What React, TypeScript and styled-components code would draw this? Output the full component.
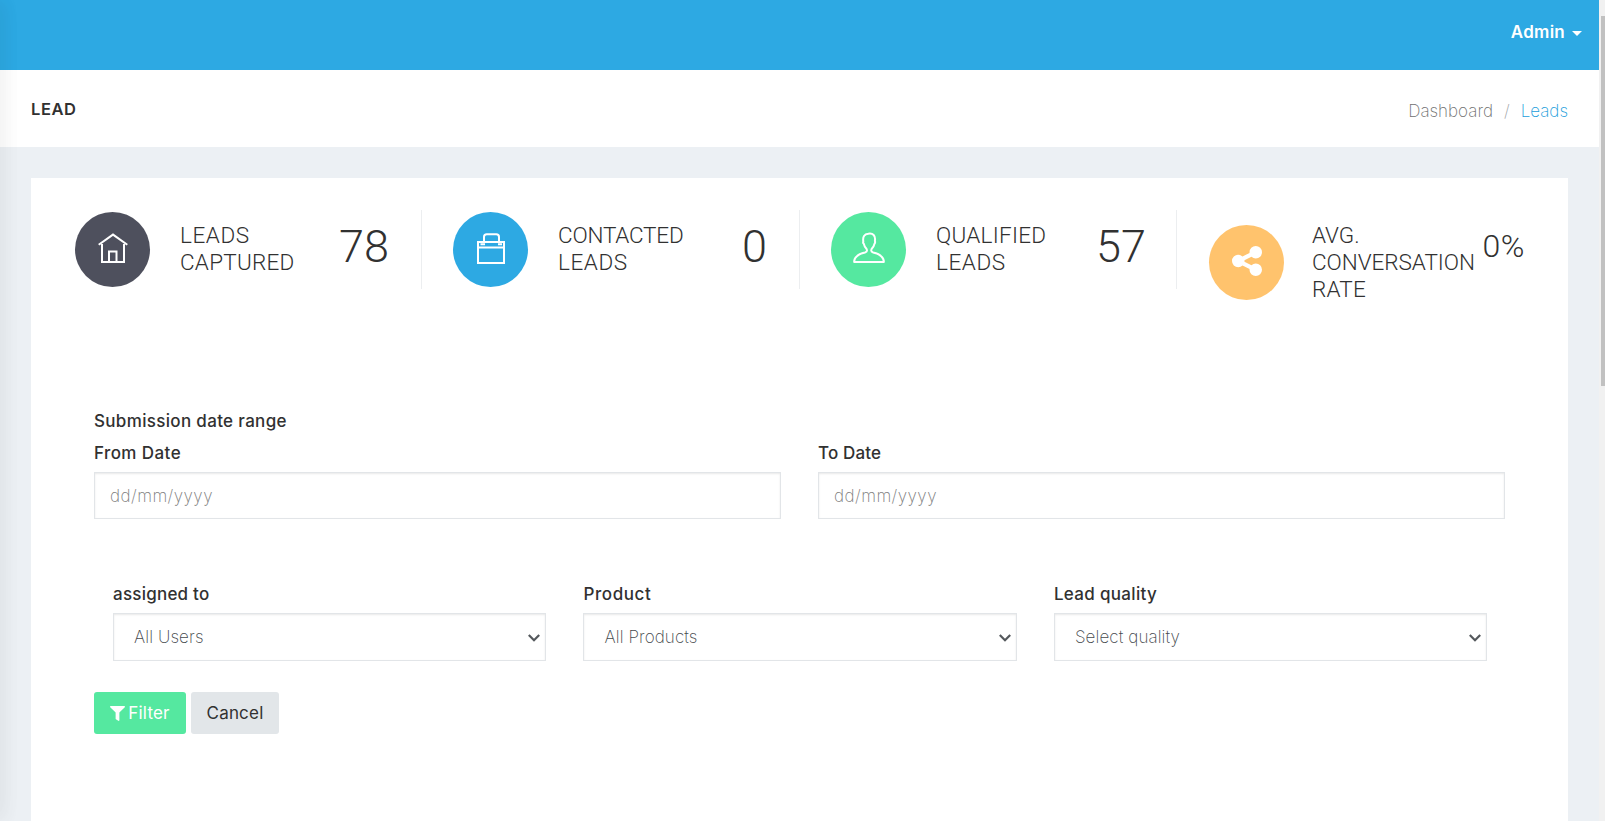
import React from "react";
import styled, { createGlobalStyle } from "styled-components";
import { FaFilter } from "react-icons/fa";

const GlobalStyle = createGlobalStyle`
  * { box-sizing: border-box; }
  html, body { margin: 0; height: 100%; overflow: hidden; background: #ecf0f4; }
  body { font-family: Inter, Roboto, sans-serif; font-size: 17px; font-weight: 200; color: #313131; }
`;

const Screen = styled.div`
  position: relative;
  display: flex;
  height: 821px;
  overflow: hidden;
`;

const SidebarShadow = styled.div`
  position: absolute;
  left: -10px;
  top: 0;
  width: 10px;
  height: 100%;
  box-shadow: 1px 0 20px rgba(0, 0, 0, 0.08), 0 0 24px rgba(0, 0, 0, 0.05);
`;

const Page = styled.div`
  flex: 1;
  min-width: 0;
`;

const TopBar = styled.header`
  display: flex;
  justify-content: flex-end;
  height: 70px;
  padding: 21px 17px 0 0;
  background: #2da9e3;
`;

const UserMenu = styled.div`
  display: flex;
  align-items: center;
  height: 22px;
  gap: 7px;
  color: #fff;
  font-size: 17px;
  font-weight: 600;
  letter-spacing: 0.25px;
`;

const Caret = styled.span`
  margin-top: 2px;
  border: 5px solid transparent;
  border-top-color: #fff;
  border-bottom: 0;
`;

const TitleBar = styled.div`
  display: flex;
  justify-content: space-between;
  height: 77px;
  padding: 0 31px 0 31px;
  background: #fff;
`;

const PageTitle = styled.h4`
  margin: 28px 0 0;
  font-size: 16.5px;
  font-weight: 600;
  line-height: 22px;
  letter-spacing: 0.6px;
`;

const Breadcrumb = styled.nav`
  display: flex;
  gap: 11px;
  margin-top: 30px;
  line-height: 22px;
  color: #6f6f6f;
`;

const Separator = styled.span`
  color: #a0a4a8;
`;

const Current = styled.span`
  color: #1a9ddb;
`;

const Card = styled.main`
  height: 700px;
  margin: 31px 31px 0;
  padding: 32px 13px 0 12px;
  background: #fff;
`;

const Stats = styled.section`
  display: grid;
  grid-template-columns: 379px 378px 377px 378px;
  height: 195px;
  align-items: start;
`;

const Stat = styled.div`
  display: flex;
  align-items: flex-start;
  min-height: 79px;
  padding: 0 32px;
  border-right: 1px solid #eceef0;
  & + & { padding-left: 31px; }
  &:nth-child(3) { padding-right: 30px; }
  &:last-child { border-right: 0; padding-left: 32px; padding-right: 30px; }
`;

const StatBody = styled.div<{ $tall: boolean }>`
  display: flex;
  align-items: center;
  margin-top: 12px;
  --icon-shift: ${(p) => (p.$tall ? "-11px 28px -10px 0" : "-10px 30px -11px 0")};
`;

const StatIcon = styled.div<{ $color: string }>`
  display: flex;
  align-items: center;
  justify-content: center;
  flex: none;
  width: 75px;
  height: 75px;
  margin: var(--icon-shift);
  padding-bottom: 3px;
  border-radius: 50%;
  background: ${(p) => p.$color};
  color: #fff;
`;

const StatLabel = styled.div`
  width: 150px;
  font: 300 22.5px/27px Roboto, sans-serif;
`;

const LabelLine = styled.span<{ $spacing: number }>`
  display: block;
  white-space: nowrap;
  letter-spacing: ${(p) => p.$spacing}px;
`;

const StatValue = styled.div<{ $small?: boolean }>`
  margin: ${(p) => (p.$small ? "17px" : "10px")} 0 0 auto;
  font: 300 ${(p) => (p.$small ? "32px/38px" : "45px/54px")} Roboto, sans-serif;
  letter-spacing: ${(p) => (p.$small ? "0.6px" : "0")};
`;

const Form = styled.form`
  padding: 0 50px 0 51px;
`;

const RangeTitle = styled.div`
  font-weight: 500;
  line-height: 32px;
  letter-spacing: 0.33px;
`;

const DateRow = styled.div`
  display: grid;
  grid-template-columns: 1fr 1fr;
  gap: 37px;
`;

const SelectRow = styled.div`
  display: grid;
  grid-template-columns: repeat(3, 1fr);
  gap: 37.4px;
  margin: 59px 18px 31px 19px;
`;

const Field = styled.label`
  display: flex;
  flex-direction: column;
`;

const FieldLabel = styled.span<{ $spacing: number }>`
  height: 35px;
  font-weight: 500;
  line-height: 32px;
  letter-spacing: ${(p) => p.$spacing}px;
`;

const DateInput = styled.input`
  width: 100%;
  height: 47px;
  padding: 0 15px;
  border: 1px solid #e2e5e8;
  border-radius: 0;
  outline: 0;
  background: #fff;
  box-shadow: inset 0 1px 2px rgba(0, 0, 0, 0.09);
  font: 200 17px Inter, sans-serif;
  letter-spacing: 0.45px;
  &::placeholder { color: #7c7c7c; opacity: 1; }
`;

const SelectBox = styled.span`
  display: grid;
  align-items: center;
  & > * { grid-area: 1 / 1; }
  & > svg { justify-self: end; margin: 1px 5px 0 0; color: #54585c; pointer-events: none; }
`;

const Select = styled.select`
  appearance: none;
  width: 100%;
  height: 48px;
  padding: 0 20px 1px;
  border: 1px solid #e2e5e8;
  border-radius: 0;
  background-color: #fff;
  box-shadow: inset 0 1px 2px rgba(0, 0, 0, 0.09);
  color: #45494d;
  font: 200 17px Inter, sans-serif;
  letter-spacing: 0.1px;
`;

const Actions = styled.div`
  display: flex;
  gap: 5px;
`;

const Button = styled.button<{ $primary?: boolean }>`
  display: flex;
  align-items: center;
  justify-content: center;
  gap: 3px;
  width: ${(p) => (p.$primary ? 92 : 88)}px;
  height: 42px;
  padding: 0;
  border: 0;
  border-radius: 3px;
  background: ${(p) => (p.$primary ? "#55e8a0" : "#e2e6e9")};
  color: ${(p) => (p.$primary ? "#fff" : "#313131")};
  font: 400 17px Inter, sans-serif;
  letter-spacing: 0.2px;
`;

const ScrollTrack = styled.div`
  width: 6px;
  padding: 16px 0 0 2px;
  background: #f1f1f1;
`;

const ScrollThumb = styled.div`
  height: 370px;
  background: #c1c1c1;
`;

const HomeIcon = () => (
  <svg width="30" height="30" viewBox="0 0 30 30" fill="none" stroke="currentColor" strokeWidth="2">
    <path d="M.7 11.8 15 1.6l14.300 10.200M4 11V29h22V11M11 29V18.500h7.500v10.500" />
  </svg>
);

const BagIcon = () => (
  <svg width="28" height="31" viewBox="0 0 28 31" fill="none" stroke="currentColor" strokeWidth="2">
    <path d="M1 9h26v21H1ZM1 14.500h26M7 10V4q0-2.700 2.700-2.700h9.600Q22 1.300 22 4v6" />
    <path d="M3.500 11.200H8M21 11.200h4" />
  </svg>
);

const UserIcon = () => (
  <svg width="32" height="32" viewBox="0 0 32 32" fill="none" stroke="currentColor" strokeWidth="2" strokeLinejoin="round">
    <path d="M14 18.500c0-1.200-.4-1.900-1.300-2.800-1.100-1.100-1.500-2.500-1.900-4-.8-.6-.8-1.500-.5-2.300-.7-4.400 1-7.400 5-7.700 4.600-.9 7.500 2 6.600 7.200.4 1.200.3 2.200-.5 3-.4 1.500-.9 2.800-1.900 3.800-.9.9-1.300 1.600-1.300 2.800 0 1.100.7 1.600 2 2 6.500 1.600 10 3.900 10.600 8.500v1H1.200v-1C1.800 24.400 5.300 22.100 12 20.500c1.300-.4 2-.9 2-2Z" />
  </svg>
);

const ShareIcon = () => (
  <svg width="30" height="30" viewBox="0 128 1536 1536" fill="currentColor">
    <path d="M1216 1024q133 0 226.500 93.500t93.500 226.500-93.500 226.500-226.500 93.500-226.500-93.500-93.500-226.500q0-12 2-34l-360-180q-92 86-218 86-133 0-226.500-93.500t-93.500-226.500 93.500-226.500 226.500-93.500q126 0 218 86l360-180q-2-22-2-34 0-133 93.500-226.500t226.500-93.500 226.500 93.500 93.500 226.500-93.500 226.500-226.500 93.500q-126 0-218-86l-360 180q2 22 2 34t-2 34l360 180q92-86 218-86z" />
  </svg>
);

const ChevronIcon = () => (
  <svg width="14" height="10" viewBox="0 0 14 10" fill="none" stroke="currentColor" strokeWidth="2.200">
    <path d="m1.800 2 5.200 5.200L12.200 2" />
  </svg>
);

const stats = [
  { color: "#4e505d", icon: <HomeIcon />, lines: [["LEADS", 0.6], ["CAPTURED", 0.25]], value: "78" },
  { color: "#2da9e3", icon: <BagIcon />, lines: [["CONTACTED", -0.2], ["LEADS", 0.6]], value: "0" },
  { color: "#55e8a0", icon: <UserIcon />, lines: [["QUALIFIED", 0.25], ["LEADS", 0.6]], value: "57" },
  { color: "#ffc36d", icon: <ShareIcon />, lines: [["AVG.", 0], ["CONVERSATION", -0.05], ["RATE", 0.2]], value: "0%" },
] as const;

const selects = [
  ["assigned to", 0.23, "All Users"],
  ["Product", 0.6, "All Products"],
  ["Lead quality", 0.32, "Select quality"],
] as const;

export default function App() {
  return (
    <>
      <GlobalStyle />
      <Screen>
        <Page>
          <TopBar>
            <UserMenu>Admin <Caret /></UserMenu>
          </TopBar>
          <TitleBar>
            <PageTitle>LEAD</PageTitle>
            <Breadcrumb>
              <span>Dashboard</span>
              <Separator>/</Separator>
              <Current>Leads</Current>
            </Breadcrumb>
          </TitleBar>
          <Card>
            <Stats>
              {stats.map((s) => (
                <Stat key={s.color}>
                  <StatBody $tall={s.lines.length > 2}>
                    <StatIcon $color={s.color}>{s.icon}</StatIcon>
                    <StatLabel>
                      {s.lines.map(([text, spacing]) => (
                        <LabelLine key={text} $spacing={spacing}>{text}</LabelLine>
                      ))}
                    </StatLabel>
                  </StatBody>
                  <StatValue $small={s.value === "0%"}>{s.value}</StatValue>
                </Stat>
              ))}
            </Stats>
            <Form>
              <RangeTitle>Submission date range</RangeTitle>
              <DateRow>
                <Field>
                  <FieldLabel $spacing={0.42}>From Date</FieldLabel>
                  <DateInput placeholder="dd/mm/yyyy" />
                </Field>
                <Field>
                  <FieldLabel $spacing={0.15}>To Date</FieldLabel>
                  <DateInput placeholder="dd/mm/yyyy" />
                </Field>
              </DateRow>
              <SelectRow>
                {selects.map(([label, spacing, option]) => (
                  <Field key={label}>
                    <FieldLabel $spacing={spacing}>{label}</FieldLabel>
                    <SelectBox>
                      <Select><option>{option}</option></Select>
                      <ChevronIcon />
                    </SelectBox>
                  </Field>
                ))}
              </SelectRow>
              <Actions>
                <Button type="button" $primary><FaFilter size={15} />Filter</Button>
                <Button type="button">Cancel</Button>
              </Actions>
            </Form>
          </Card>
        </Page>
        <ScrollTrack><ScrollThumb /></ScrollTrack>
        <SidebarShadow />
      </Screen>
    </>
  );
}
